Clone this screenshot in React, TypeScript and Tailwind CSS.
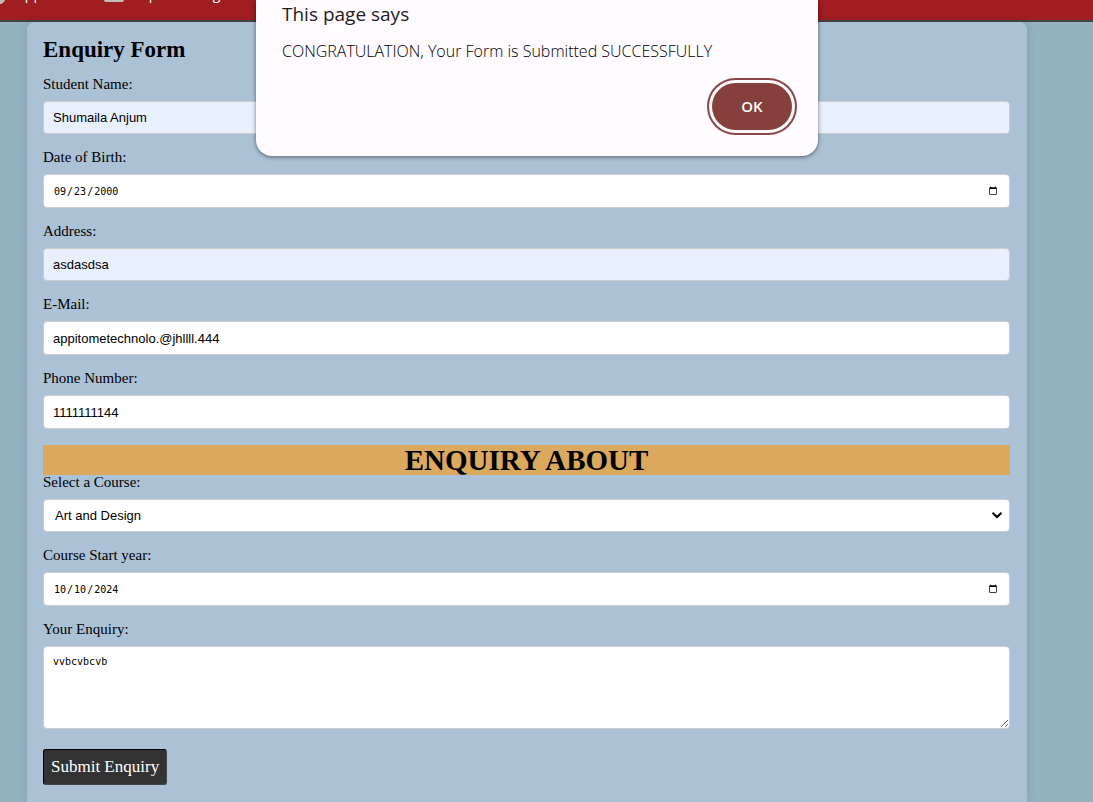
import type { ReactNode } from "react";

const control =
  "block w-full rounded border border-[#ccc] px-[9px] text-black outline-none";
const sans = "font-['Liberation_Sans',sans-serif] text-[13px]";
const mono = "font-['DejaVu_Sans_Mono',monospace] text-[10px]";

function Field({ id, label, children }: { id: string; label: string; children: ReactNode }) {
  return (
    <div className="mb-4">
      <label htmlFor={id} className="mb-[9px] block text-[15px] leading-[15px]">
        {label}
      </label>
      {children}
    </div>
  );
}

function BookmarksBar() {
  return (
    <nav className="flex h-[22px] items-start overflow-hidden border-b-2 border-[#444] bg-[#a01d20] font-['Open_Sans',sans-serif] text-[14px] leading-5 text-white">
      <div className="-mt-4 flex items-center">
        <svg className="h-5 w-2" viewBox="0 0 8 20" aria-hidden="true">
          <circle cx="-3" cy="12" r="9" fill="#c4bcb8" />
        </svg>
        <a href="#apps" className="ml-2">Appitome</a>
        <svg className="ml-6 h-5 w-5" viewBox="0 0 20 20" aria-hidden="true">
          <path d="M2 4h6l2 2h8a2 2 0 0 1 2 2v8a2 2 0 0 1-2 2H2a2 2 0 0 1-2-2V6a2 2 0 0 1 2-2z" fill="#c4bcb8" />
        </svg>
        <a href="#imported" className="ml-2">Imported bag</a>
      </div>
    </nav>
  );
}

function AlertDialog() {
  return (
    <div
      role="alertdialog"
      aria-labelledby="alert-title"
      aria-describedby="alert-text"
      className="absolute top-0 left-[256px] flex w-[562px] flex-col rounded-b-2xl bg-[#fffbff] px-[26px] pt-1 pb-[26px] font-['Open_Sans',sans-serif] text-[#1f1b1c] shadow-[0_1px_4px_rgba(0,0,0,0.5)]"
    >
      <h2 id="alert-title" className="text-[19px] leading-5 font-medium">This page says</h2>
      <p id="alert-text" className="mt-[17px] text-[16px] leading-5 font-light text-black">
        CONGRATULATION, Your Form is Submitted SUCCESSFULLY
      </p>
      <button
        type="button"
        className="mt-[22px] h-[47px] w-20 self-end rounded-full bg-[#86403c] text-[15px] font-semibold text-white ring-2 ring-[#8c4549] ring-offset-3 ring-offset-[#fffbff]"
      >
        OK
      </button>
    </div>
  );
}

export default function App() {
  return (
    <div className="relative min-h-screen overflow-hidden bg-[#94b1bf]">
      <BookmarksBar />
      <main className="mr-[66px] ml-[27px] min-h-[780px] rounded-t-lg bg-[#abc1d5] pt-4 pr-[17px] pb-[17px] pl-4 font-['Liberation_Serif',serif] text-black shadow-[0_0_10px_rgba(0,0,0,0.1)]">
        <h1 className="mb-[15px] text-[23px] leading-6 font-bold">Enquiry Form</h1>
        <form>
          <Field id="name" label="Student Name:">
            <input id="name" type="text" defaultValue="Shumaila Anjum" className={`${control} ${sans} h-[33px] bg-[#e8f0fe]`} />
          </Field>
          <Field id="dob" label="Date of Birth:">
            <input id="dob" type="date" defaultValue="2000-09-23" className={`${control} ${mono} h-[34px] bg-white`} />
          </Field>
          <Field id="address" label="Address:">
            <input id="address" type="text" defaultValue="asdasdsa" className={`${control} ${sans} h-[33px] bg-[#e8f0fe]`} />
          </Field>
          <Field id="email" label="E-Mail:">
            <input id="email" type="email" defaultValue="appitometechnolo.@jhllll.444" className={`${control} ${sans} h-[34px] bg-white`} />
          </Field>
          <Field id="phone" label="Phone Number:">
            <input id="phone" type="tel" defaultValue="1111111144" className={`${control} ${sans} h-[34px] bg-white`} />
          </Field>
          <h2 className="bg-[#dba95e] text-center text-[29px] leading-[30px] font-bold">ENQUIRY ABOUT</h2>
          <Field id="course" label="Select a Course:">
            <div className="relative">
              <select
                id="course"
                defaultValue="art"
                className="block h-[33px] w-full appearance-none rounded border border-[#ccc] bg-white px-[11px] font-['Liberation_Sans',sans-serif] text-[13px] text-black outline-none"
              >
                <option value="art">Art and Design</option>
              </select>
              <svg className="pointer-events-none absolute top-3 right-[7px] h-2 w-3" viewBox="0 0 12 8" aria-hidden="true">
                <path d="M1.5 1.8 6 6 10.5 1.8" fill="none" stroke="#000" strokeWidth="2.2" />
              </svg>
            </div>
          </Field>
          <Field id="start" label="Course Start year:">
            <input id="start" type="date" defaultValue="2024-10-10" className={`${control} ${mono} h-[34px] bg-white`} />
          </Field>
          <Field id="enquiry" label="Your Enquiry:">
            <textarea id="enquiry" defaultValue="vvbcvbcvb" className={`${control} ${mono} h-[83px] resize bg-white py-2 leading-[14px]`} />
          </Field>
          <button type="submit" className="mt-1 h-9 rounded-[3px] border border-t-black border-r-[#444] border-b-[#444] border-l-black bg-[#333] px-[7px] text-[17px] text-white">
            Submit Enquiry
          </button>
        </form>
      </main>
      <AlertDialog />
    </div>
  );
}
